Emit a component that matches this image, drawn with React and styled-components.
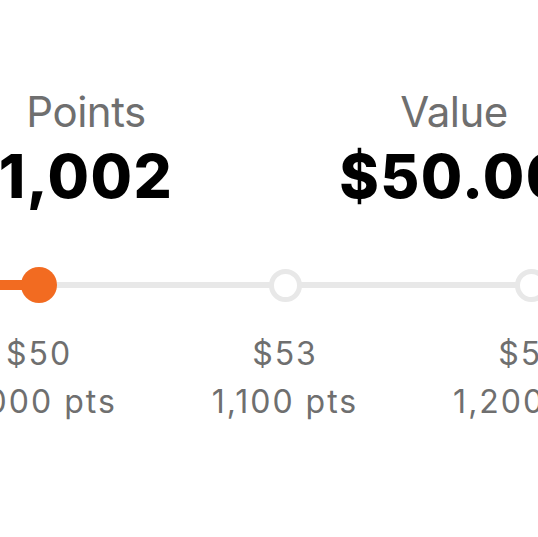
import React from "react";
import styled, { createGlobalStyle } from "styled-components";

const Global = createGlobalStyle`
  html, body { margin: 0; padding: 0; background: #ffffff; }
  body { width: 538px; height: 537px; overflow: hidden; font-family: Inter, "Noto Sans", sans-serif; }
`;

const Frame = styled.div`
  width: 538px;
  height: 537px;
  overflow: hidden;
  padding-top: 86px;
  box-sizing: border-box;
`;

const Stats = styled.div`
  display: grid;
  grid-template-columns: 368px 368px;
  margin-left: -98px;
  width: 736px;
`;

const Stat = styled.div`
  display: flex;
  flex-direction: column;
  align-items: center;
`;

const StatLabel = styled.div`
  font-size: 42px;
  line-height: 52px;
  color: #6f6f6f;
  font-weight: 400;
  letter-spacing: -0.5px;
`;

const StatValue = styled.div`
  font-size: 60px;
  line-height: 72px;
  color: #000;
  font-weight: 800;
  letter-spacing: 1.5px;
  margin-top: 2px;
  white-space: nowrap;
`;

const Track = styled.div`
  display: grid;
  grid-template-columns: repeat(3, 246px);
  margin-left: -84px;
  width: 738px;
  margin-top: 55px;
`;

const Step = styled.div`
  display: flex;
  flex-direction: column;
  align-items: center;
`;

const Rail = styled.div`
  position: relative;
  width: 100%;
  height: 36px;
  display: flex;
  align-items: center;
  justify-content: center;
`;

const Line = styled.div`
  position: absolute;
  top: 50%;
  height: ${(p) => (p.$done ? 10 : 6)}px;
  transform: translateY(-50%);
  background: ${(p) => (p.$done ? "#f26b21" : "#e8e8e8")};
  ${(p) => (p.$side === "left" ? "left: 0; right: 50%;" : "left: 50%; right: 0;")}
`;

const Node = styled.div`
  position: relative;
  z-index: 1;
  box-sizing: border-box;
  width: ${(p) => (p.$done ? 36 : 33)}px;
  height: ${(p) => (p.$done ? 36 : 33)}px;
  border-radius: 50%;
  background: ${(p) => (p.$done ? "#f26b21" : "#ffffff")};
  border: ${(p) => (p.$done ? "none" : "5px solid #e8e8e8")};
`;

const Caption = styled.div`
  margin-top: ${(p) => p.$gap || 0}px;
  font-size: 32px;
  line-height: 48px;
  letter-spacing: 2px;
  color: #6f6f6f;
  white-space: nowrap;
`;

const steps = [
  { price: "$50", pts: "1,000 pts", done: true },
  { price: "$53", pts: "1,100 pts", done: false },
  { price: "$55", pts: "1,200 pts", done: false },
];

export default function App() {
  return (
    <>
      <Global />
      <Frame>
        <Stats>
          <Stat>
            <StatLabel>Points</StatLabel>
            <StatValue>1,002</StatValue>
          </Stat>
          <Stat>
            <StatLabel>Value</StatLabel>
            <StatValue>$50.00</StatValue>
          </Stat>
        </Stats>
        <Track>
          {steps.map((s, i) => (
            <Step key={i}>
              <Rail>
                <Line $side="left" $done={s.done} />
                <Line $side="right" $done={false} />
                <Node $done={s.done} />
              </Rail>
              <Caption $gap={27}>{s.price}</Caption>
              <Caption>{s.pts}</Caption>
            </Step>
          ))}
        </Track>
      </Frame>
    </>
  );
}
